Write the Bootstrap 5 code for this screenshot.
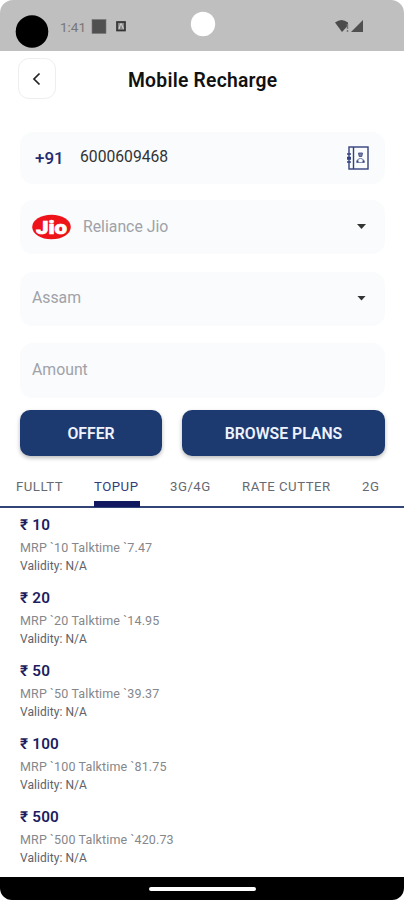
<!DOCTYPE html>
<html lang="en">
<head>
<meta charset="utf-8">
<meta name="viewport" content="width=device-width, initial-scale=1">
<title>Mobile Recharge</title>
<link href="https://cdn.jsdelivr.net/npm/bootstrap@5.3.0/dist/css/bootstrap.min.css" rel="stylesheet">
<style>
body{font-family:Roboto,"Noto Sans",sans-serif;background:#fff;overflow:hidden}
.screen{width:404px;height:900px;line-height:1}
.status{height:51px;background:#bfbfbf;border-radius:13px 13px 0 0}
.status svg{display:block}
.clock{font-size:13.5px;color:#777;width:26px;margin-left:60px;white-space:nowrap}
.topbar{height:81px;padding:7px 18px 0}
.back{width:38px;height:41px;border:1px solid #eee;border-radius:11px;background:#fff}
.heading{font-size:19.3px;font-weight:600;color:#111;margin:0 0 0 72px;padding-top:11px;letter-spacing:.25px}
.fields{padding:0 19px 0 20px}
.field{background:#f9fbfd;border-radius:13px;padding:0 12px 1px;font-size:15.8px;color:#a0a2a8}
.f1{height:52px;margin-bottom:16px}
.f2{height:54px;margin-bottom:18px}
.f3{height:54px;margin-bottom:17px;padding-bottom:2px}
.f4{height:55px;margin-bottom:12px;padding-bottom:2px}
.code{color:#25296f;font-size:17px;font-weight:500;margin-left:3px;width:45px;padding-top:1px}
.number{color:#333;font-size:15.7px;padding-bottom:2px}
.caret{width:9px;height:5px;background:#333;clip-path:polygon(0 0,100% 0,50% 100%);margin-right:7px}
.action{height:46px;background:#1c3a70;color:#eef3ff;border:0;border-radius:10px;font-weight:600;font-size:15.8px;box-shadow:0 2px 4px rgba(0,0,0,.28);padding:2px 0 0}
.action:hover{background:#1c3a70;color:#eef3ff}
.w-offer{width:142px}.w-plans{width:203px}
.tabs{height:52px;border-bottom:2px solid #334478;padding:0 0 0 16px;font-size:13.2px;font-weight:400;color:#666972;letter-spacing:.5px}
.tabs a{color:inherit;text-decoration:none;white-space:nowrap;height:51px;padding-top:23.5px;display:block;letter-spacing:inherit}
.tabs a.active{color:#343d7c;border-bottom:6px solid #10185f}
.plans{padding:8px 20px 0;height:369px}
.plan{height:72.9px}
.price{font-size:15.3px;font-weight:600;color:#1b1d60;height:18px;line-height:19px;letter-spacing:.2px}
.desc{font-size:12.5px;color:#85878b;height:18px;line-height:18px;margin-top:5px;letter-spacing:.13px}
.valid{font-size:12px;color:#606268;height:18px;line-height:18px;letter-spacing:.05px}
.homebar{height:23px;background:#000;border-radius:0 0 12px 12px}
.pill{width:107px;height:4px;background:#fff;border-radius:3px}
</style>
</head>
<body>
<main class="screen d-flex flex-column">
  <header class="status position-relative">
    <svg class="position-absolute top-0 start-0" width="404" height="51" viewBox="0 0 404 51" aria-hidden="true">
      <circle cx="32" cy="31.500" r="16.300"/>
      <rect x="92" y="19.500" width="14" height="14" fill="#505050" stroke="#777" stroke-width=".6"/>
      <rect x="117" y="22" width="8" height="8.500" fill="#888" stroke="#333" stroke-width="1.700"/>
      <path d="M119 29l1.500-5h1l2 5" fill="none" stroke="#ccc" stroke-width="1.100"/>
      <circle cx="203" cy="24" r="12.200" fill="#fff"/>
      <path d="M335 22.500q6.500-5 13 0v3l-6 6.500z" fill="#4b4b4b"/>
      <path d="M347.500 24v8" stroke="#777" stroke-width="1.500" stroke-dasharray="5 1"/>
      <path d="M363 20v12h-12z" fill="#505050"/>
    </svg>
    <div class="d-flex align-items-center h-100 pt-1 pb-1"><span class="clock pt-1">1:41</span></div>
  </header>
  <div class="topbar d-flex align-items-start">
    <button class="back d-flex align-items-center justify-content-center p-0" aria-label="Back">
      <svg width="10" height="14" viewBox="0 0 10 14"><path d="M7.500 1.500L2 7l5.500 5.500" fill="none" stroke="#222" stroke-width="1.700"/></svg>
    </button>
    <h1 class="heading">Mobile Recharge</h1>
  </div>
  <section class="fields">
    <div class="field f1 d-flex align-items-center">
      <span class="code">+91</span><span class="number">6000609468</span>
      <svg class="ms-auto me-1" width="22" height="24" viewBox="0 0 22 24" fill="none" stroke="#35417d" stroke-width="1.400">
        <rect x="2" y="1" width="19" height="22"/>
        <path d="M6.500 1v22M0 8h4M0 11.500h4M0 13h4M0 16h4"/>
        <path d="M11.500 7h4l-.7 3.500h-2.600z" fill="#7580ab" stroke-width=".8"/>
        <path d="M10 16.500l.5-2.500 2-1.500h2l2 1.500.5 2.500z" stroke="#8790b5" stroke-width="1.100"/>
        <path d="M9.500 15.500h2M15.500 15.500h2" stroke-width="2"/>
      </svg>
    </div>
    <div class="field f2 d-flex align-items-center">
      <svg width="39" height="26" viewBox="0 0 39 26" role="img" aria-label="Jio">
        <ellipse cx="19.500" cy="13" rx="19.300" ry="12.200" fill="#ee1219"/>
        <text x="19.500" y="19.500" text-anchor="middle" textLength="31" lengthAdjust="spacingAndGlyphs" font-family="Roboto,sans-serif" font-size="18.500" font-weight="900" fill="#fff" stroke="#fff" stroke-width=".7">Jio</text>
      </svg>
      <span class="carrier ms-2 ps-1">Reliance Jio</span><span class="caret ms-auto"></span>
    </div>
    <div class="field f3 d-flex align-items-center"><span>Assam</span><span class="caret ms-auto"></span></div>
    <div class="field f4 d-flex align-items-center"><span>Amount</span></div>
    <div class="d-flex justify-content-between">
      <button class="btn action w-offer">OFFER</button>
      <button class="btn action w-plans">BROWSE PLANS</button>
    </div>
  </section>
  <nav class="tabs d-flex">
    <a href="#" style="width:78px">FULLTT</a>
    <a href="#" class="active" style="width:46px">TOPUP</a>
    <a href="#" style="width:102px;padding-left:30px">3G/4G</a>
    <a href="#" style="width:120px">RATE CUTTER</a>
    <a href="#">2G</a>
  </nav>
  <section class="plans">
    <div class="plan"><div class="price">₹ 10</div><div class="desc">MRP `10 Talktime `7.47</div><div class="valid">Validity: N/A</div></div>
    <div class="plan"><div class="price">₹ 20</div><div class="desc">MRP `20 Talktime `14.95</div><div class="valid">Validity: N/A</div></div>
    <div class="plan"><div class="price">₹ 50</div><div class="desc">MRP `50 Talktime `39.37</div><div class="valid">Validity: N/A</div></div>
    <div class="plan"><div class="price">₹ 100</div><div class="desc">MRP `100 Talktime `81.75</div><div class="valid">Validity: N/A</div></div>
    <div class="plan"><div class="price">₹ 500</div><div class="desc">MRP `500 Talktime `420.73</div><div class="valid">Validity: N/A</div></div>
  </section>
  <footer class="homebar d-flex justify-content-center align-items-center"><div class="pill"></div></footer>
</main>
<script src="https://cdn.jsdelivr.net/npm/bootstrap@5.3.0/dist/js/bootstrap.bundle.min.js"></script>
</body>
</html>
